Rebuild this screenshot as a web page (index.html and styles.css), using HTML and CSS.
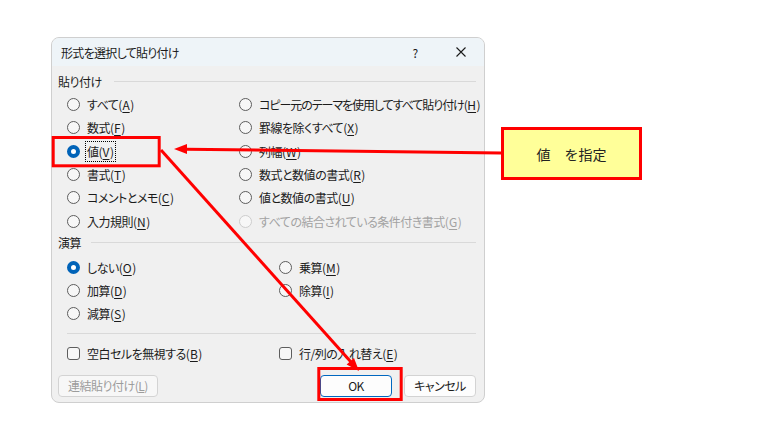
FILE: index.html
```html
<!DOCTYPE html>
<html lang="ja">

<head>
  <meta charset="UTF-8" />
  <title>形式を選択して貼り付け</title>
  <link rel="stylesheet" href="styles.css">
</head>

<body>
  <div class="dialog">
    <div class="titlebar">
      <span class="title">形式を選択して貼り付け</span>
      <span class="help">?</span>
      <span class="close">
        <svg width="10" height="10" viewBox="0 0 10 10"><path d="M0.5 0.5L9.5 9.5M9.5 0.5L0.5 9.5" stroke="#1a1a1a" stroke-width="1.1" fill="none" /></svg>
      </span>
    </div>

    <div class="content">
      <div class="legend"><span>貼り付け</span><i></i></div>
      <div class="paste-grid">
        <label class="opt"><span class="radio"></span>すべて(<u>A</u>)</label>
        <label class="opt"><span class="radio"></span>数式(<u>F</u>)</label>
        <label class="opt"><span class="radio on"></span><span class="focus">値(<u>V</u>)</span></label>
        <label class="opt"><span class="radio"></span>書式(<u>T</u>)</label>
        <label class="opt"><span class="radio"></span>コメントとメモ(<u>C</u>)</label>
        <label class="opt"><span class="radio"></span>入力規則(<u>N</u>)</label>
        <label class="opt long"><span class="radio"></span>コピー元のテーマを使用してすべて貼り付け(<u>H</u>)</label>
        <label class="opt"><span class="radio"></span>罫線を除くすべて(<u>X</u>)</label>
        <label class="opt"><span class="radio"></span>列幅(<u>W</u>)</label>
        <label class="opt"><span class="radio"></span>数式と数値の書式(<u>R</u>)</label>
        <label class="opt"><span class="radio"></span>値と数値の書式(<u>U</u>)</label>
        <label class="opt disabled"><span class="radio"></span>すべての結合されている条件付き書式(<u>G</u>)</label>
      </div>

      <div class="legend legend-op"><span>演算</span><i></i></div>
      <div class="op-grid">
        <label class="opt"><span class="radio on"></span>しない(<u>O</u>)</label>
        <label class="opt"><span class="radio"></span>加算(<u>D</u>)</label>
        <label class="opt"><span class="radio"></span>減算(<u>S</u>)</label>
        <label class="opt"><span class="radio"></span>乗算(<u>M</u>)</label>
        <label class="opt"><span class="radio"></span>除算(<u>I</u>)</label>
      </div>

      <div class="sep"></div>

      <div class="checks">
        <label class="opt"><span class="check"></span>空白セルを無視する(<u>B</u>)</label>
        <label class="opt"><span class="check"></span>行/列の入れ替え(<u>E</u>)</label>
      </div>

      <div class="buttons">
        <button class="btn" disabled>連結貼り付け(<u>L</u>)</button>
        <span class="spacer"></span>
        <button class="btn btn-ok">OK</button>
        <button class="btn">キャンセル</button>
      </div>
    </div>
  </div>

  <!-- annotations -->
  <div class="note">値　を指定</div>
  <svg class="marks" width="765" height="436" viewBox="0 0 765 436">
    <rect x="53.2" y="137.5" width="106" height="28.3" fill="none" stroke="#ff0000" stroke-width="3" />
    <rect x="318.8" y="368.5" width="82.4" height="31" fill="none" stroke="#ff0000" stroke-width="3" />
    <line x1="501" y1="153" x2="186" y2="149.2" stroke="#ff0000" stroke-width="3" />
    <polygon points="174,149 187,144 187,154" fill="#ff0000" />
    <line x1="161" y1="150" x2="351" y2="362" stroke="#ff0000" stroke-width="3" />
    <polygon points="359,371 346.6,364.6 354,358" fill="#ff0000" />
  </svg>
</body>

</html>
```

FILE: styles.css
```css
body {
  margin: 0;
  width: 765px;
  height: 436px;
  background: #fff;
  font-family: "Noto Sans CJK JP", "Noto Sans", sans-serif;
  font-size: 12px;
  font-feature-settings: "palt";
  letter-spacing: -0.5px;
  color: #1b1b1b;
  position: relative;
  overflow: hidden;
}

.dialog {
  box-sizing: border-box;
  margin: 37px 0 0 51px;
  width: 434px;
  height: 366px;
  background: #f0f0f0;
  border: 1px solid #cfcfcf;
  border-radius: 8px;
  overflow: hidden;
}

.titlebar {
  display: flex;
  align-items: center;
  height: 28px;
  background: #eef4f8;
}

.title {
  flex: 1;
  padding-left: 9px;
  letter-spacing: -0.7px;
}

.help,
.close {
  width: 46px;
  text-align: center;
}

.close svg {
  display: block;
  margin: 0 auto;
}

.content {
  padding: 5px 8px 0 6px;
}

.legend {
  display: flex;
  align-items: center;
  height: 20px;
}

.legend i {
  flex: 1;
  height: 1px;
  margin-left: 12px;
  background: #d9d9d9;
}

.legend-op i {
  margin-left: 10px;
}

.paste-grid {
  display: grid;
  grid-template-columns: 172px 1fr;
  grid-template-rows: repeat(6, 23.3px);
  grid-auto-flow: column;
  margin: 2px 0 0 9px;
}

.op-grid {
  display: grid;
  grid-template-columns: 212px 1fr;
  grid-template-rows: repeat(3, 23px);
  grid-auto-flow: column;
  margin: 3px 0 0 9px;
}

.opt {
  display: flex;
  align-items: center;
  white-space: nowrap;
}

.opt.long {
  letter-spacing: -1.05px;
}

.opt u {
  letter-spacing: 0;
  margin: 0 0.5px;
  text-underline-offset: 2px;
}

.radio {
  box-sizing: border-box;
  flex: none;
  width: 13px;
  height: 13px;
  margin-right: 7px;
  border: 1px solid #5d5d5d;
  border-radius: 50%;
  background: #f7f7f7;
}

.radio.on {
  border: 4px solid #0063b8;
  background: #fff;
}

.disabled {
  color: #a2a2a2;
}

.disabled .radio {
  border-color: #cdcdcd;
}

.focus {
  outline: 1px dotted #000;
  outline-offset: 1px;
  line-height: 17px;
}

.sep {
  height: 1px;
  margin: 8px 0 0 9px;
  background: #d9d9d9;
}

.checks {
  display: grid;
  grid-template-columns: 212px 1fr;
  height: 20px;
  margin: 10px 0 0 9px;
}

.check {
  box-sizing: border-box;
  flex: none;
  width: 13px;
  height: 13px;
  margin-right: 7px;
  border: 1px solid #5d5d5d;
  border-radius: 3px;
  background: #f7f7f7;
}

.buttons {
  display: flex;
  gap: 12px;
  margin-top: 11px;
}

.spacer {
  flex: 1;
}

.btn {
  box-sizing: border-box;
  height: 22px;
  padding: 0 6px;
  font: inherit;
  font-size: 12px;
  letter-spacing: inherit;
  color: #1b1b1b;
  background: #fdfdfd;
  border: 1px solid #d3d3d3;
  border-radius: 4px;
  min-width: 72px;
}

.btn:disabled {
  width: 100px;
  color: #9c9c9c;
  background: #f7f7f7;
}

.btn-ok {
  border-color: #0067c0;
}

.note {
  position: absolute;
  left: 501px;
  top: 127px;
  box-sizing: border-box;
  width: 141px;
  height: 53px;
  border: 3px solid #ff0000;
  background: #ffff99;
  display: flex;
  align-items: center;
  justify-content: center;
  font-size: 14px;
  font-feature-settings: normal;
  letter-spacing: normal;
  color: #222;
}

.marks {
  position: absolute;
  left: 0;
  top: 0;
  pointer-events: none;
}
```
